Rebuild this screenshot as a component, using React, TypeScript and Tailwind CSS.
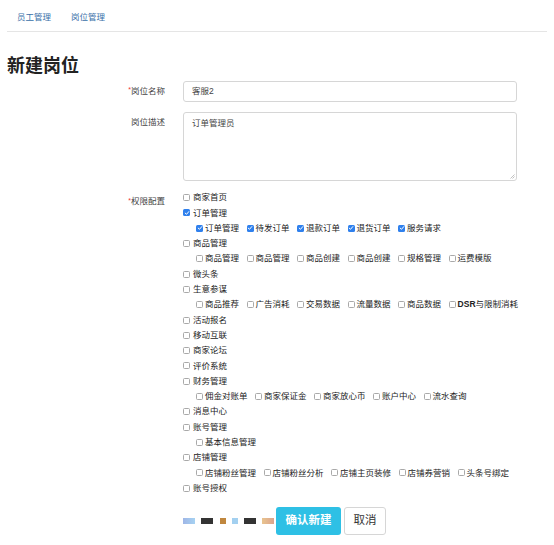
import React from "react";

type Perm = { name: string; checked?: boolean; children?: { name: string; checked?: boolean }[] };

const PERMS: Perm[] = [
  { name: "商家首页" },
  {
    name: "订单管理",
    checked: true,
    children: [
      { name: "订单管理", checked: true },
      { name: "待发订单", checked: true },
      { name: "退款订单", checked: true },
      { name: "退货订单", checked: true },
      { name: "服务请求", checked: true },
    ],
  },
  {
    name: "商品管理",
    children: [
      { name: "商品管理" },
      { name: "商品管理" },
      { name: "商品创建" },
      { name: "商品创建" },
      { name: "规格管理" },
      { name: "运费模版" },
    ],
  },
  { name: "微头条" },
  {
    name: "生意参谋",
    children: [
      { name: "商品推荐" },
      { name: "广告消耗" },
      { name: "交易数据" },
      { name: "流量数据" },
      { name: "商品数据" },
      { name: "DSR与限制消耗" },
    ],
  },
  { name: "活动报名" },
  { name: "移动互联" },
  { name: "商家论坛" },
  { name: "评价系统" },
  {
    name: "财务管理",
    children: [
      { name: "佣金对账单" },
      { name: "商家保证金" },
      { name: "商家放心币" },
      { name: "账户中心" },
      { name: "流水查询" },
    ],
  },
  { name: "消息中心" },
  { name: "账号管理", children: [{ name: "基本信息管理" }] },
  {
    name: "店铺管理",
    children: [
      { name: "店铺粉丝管理" },
      { name: "店铺粉丝分析" },
      { name: "店铺主页装修" },
      { name: "店铺券营销" },
      { name: "头条号绑定" },
    ],
  },
  { name: "账号授权" },
];

function Box({ checked }: { checked?: boolean }) {
  if (checked) {
    return (
      <span className="w-[7px] h-[7px] rounded-[1.5px] bg-[#2f80ed] flex items-center justify-center shrink-0">
        <svg width="6" height="6" viewBox="0 0 6 6">
          <path d="M1.2 3.1 L2.5 4.3 L4.8 1.6" fill="none" stroke="#fff" strokeWidth="1" strokeLinecap="round" strokeLinejoin="round" />
        </svg>
      </span>
    );
  }
  return <span className="w-[7px] h-[7px] rounded-[1.5px] border border-[#a9a9a9] bg-white shrink-0" />;
}

function Item({ name, checked, sub }: { name: string; checked?: boolean; sub?: boolean }) {
  // "DSR" is drawn heavier in the original
  const label = name.startsWith("DSR") ? (
    <span>
      <span className="font-semibold">DSR</span>
      {name.slice(3)}
    </span>
  ) : (
    <span>{name}</span>
  );
  return (
    <label className={`flex items-center ${sub ? "gap-[2px] mr-[7.5px]" : "gap-[3px]"}`}>
      <Box checked={checked} />
      {label}
    </label>
  );
}

export default function App() {
  return (
    <div
      className="w-[554px] min-h-[545px] bg-white text-[#222] px-[7px]"
      style={{ fontFamily: '"Liberation Sans", "Noto Sans CJK SC", sans-serif' }}
    >
      {/* Tabs */}
      <div className="flex border-b border-[#e5e5e5] text-[8.5px] text-[#3a6fa8]">
        <a className="px-[10px] pt-[11px] pb-[8px] leading-[12px]">员工管理</a>
        <a className="px-[10px] pt-[11px] pb-[8px] leading-[12px]">岗位管理</a>
      </div>

      <h1 className="mt-[22px] text-[18px] leading-[24px] font-bold text-[#222]">新建岗位</h1>

      <div className="mt-[3px] text-[8.5px]">
        {/* name */}
        <div className="flex items-center">
          <div className="w-[158px] text-right text-[#444]">
            <span className="text-[#e33] text-[7px] align-top">*</span>岗位名称
          </div>
          <div className="ml-[18px] w-[334px] h-[21px] border border-[#d6d6d6] rounded-[3px] flex items-center px-[8px] text-[#444]">
            客服2
          </div>
        </div>

        {/* desc */}
        <div className="flex mt-[10px]">
          <div className="w-[158px] text-right text-[#444] pt-[4px] leading-[12px]">岗位描述</div>
          <div className="relative ml-[18px] w-[334px] h-[69px] border border-[#d6d6d6] rounded-[3px] px-[8px] pt-[4px] leading-[12px] text-[#444]">
            订单管理员
            <svg className="absolute right-[1px] bottom-[1px]" width="5" height="5" viewBox="0 0 5 5">
              <path d="M4.5 0.5 L0.5 4.5 M4.5 2.5 L2.5 4.5" stroke="#999" strokeWidth="0.6" />
            </svg>
          </div>
        </div>

        {/* permissions */}
        <div className="flex mt-[9px]">
          <div className="w-[158px] text-right text-[#444] pt-[5px] leading-[12px]">
            <span className="text-[#e33] text-[7px] align-top">*</span>权限配置
          </div>
          <div className="ml-[18px] flex flex-col">
            {PERMS.map((p, i) => (
              <React.Fragment key={i}>
                <div className="h-[15.3px] flex items-center">
                  <Item name={p.name} checked={p.checked} />
                </div>
                {p.children && (
                  <div className="h-[15.3px] flex items-center pl-[13px]">
                    {p.children.map((c, j) => (
                      <Item key={j} name={c.name} checked={c.checked} sub />
                    ))}
                  </div>
                )}
              </React.Fragment>
            ))}
          </div>
        </div>

        {/* actions */}
        <div className="flex items-center ml-[176px] mt-[11px]">
          <div className="flex items-center h-[28px]">
            <span className="w-[12px] h-[6px] bg-gradient-to-r from-[#9fb6e6] to-[#a6d2f2]" />
            <span className="w-[12px] h-[6px] ml-[6px] bg-[#333]" />
            <span className="w-[6px] h-[6px] ml-[7px] bg-[#c0873e]" />
            <span className="w-[6px] h-[6px] ml-[6px] bg-[#a3d0f0]" />
            <span className="w-[12px] h-[6px] ml-[6px] bg-[#333]" />
            <span className="w-[12px] h-[6px] ml-[6px] bg-gradient-to-r from-[#e9c48e] to-[#dba48e]" />
          </div>
          <button className="ml-[2px] w-[65px] h-[28px] rounded-[3px] bg-[#2ec0e5] text-white font-bold text-[11.5px]">
            确认新建
          </button>
          <button className="ml-[3px] w-[42px] h-[28px] rounded-[3px] border border-[#d6d6d6] bg-white text-[#333] text-[11.5px]">
            取消
          </button>
        </div>
      </div>
    </div>
  );
}
